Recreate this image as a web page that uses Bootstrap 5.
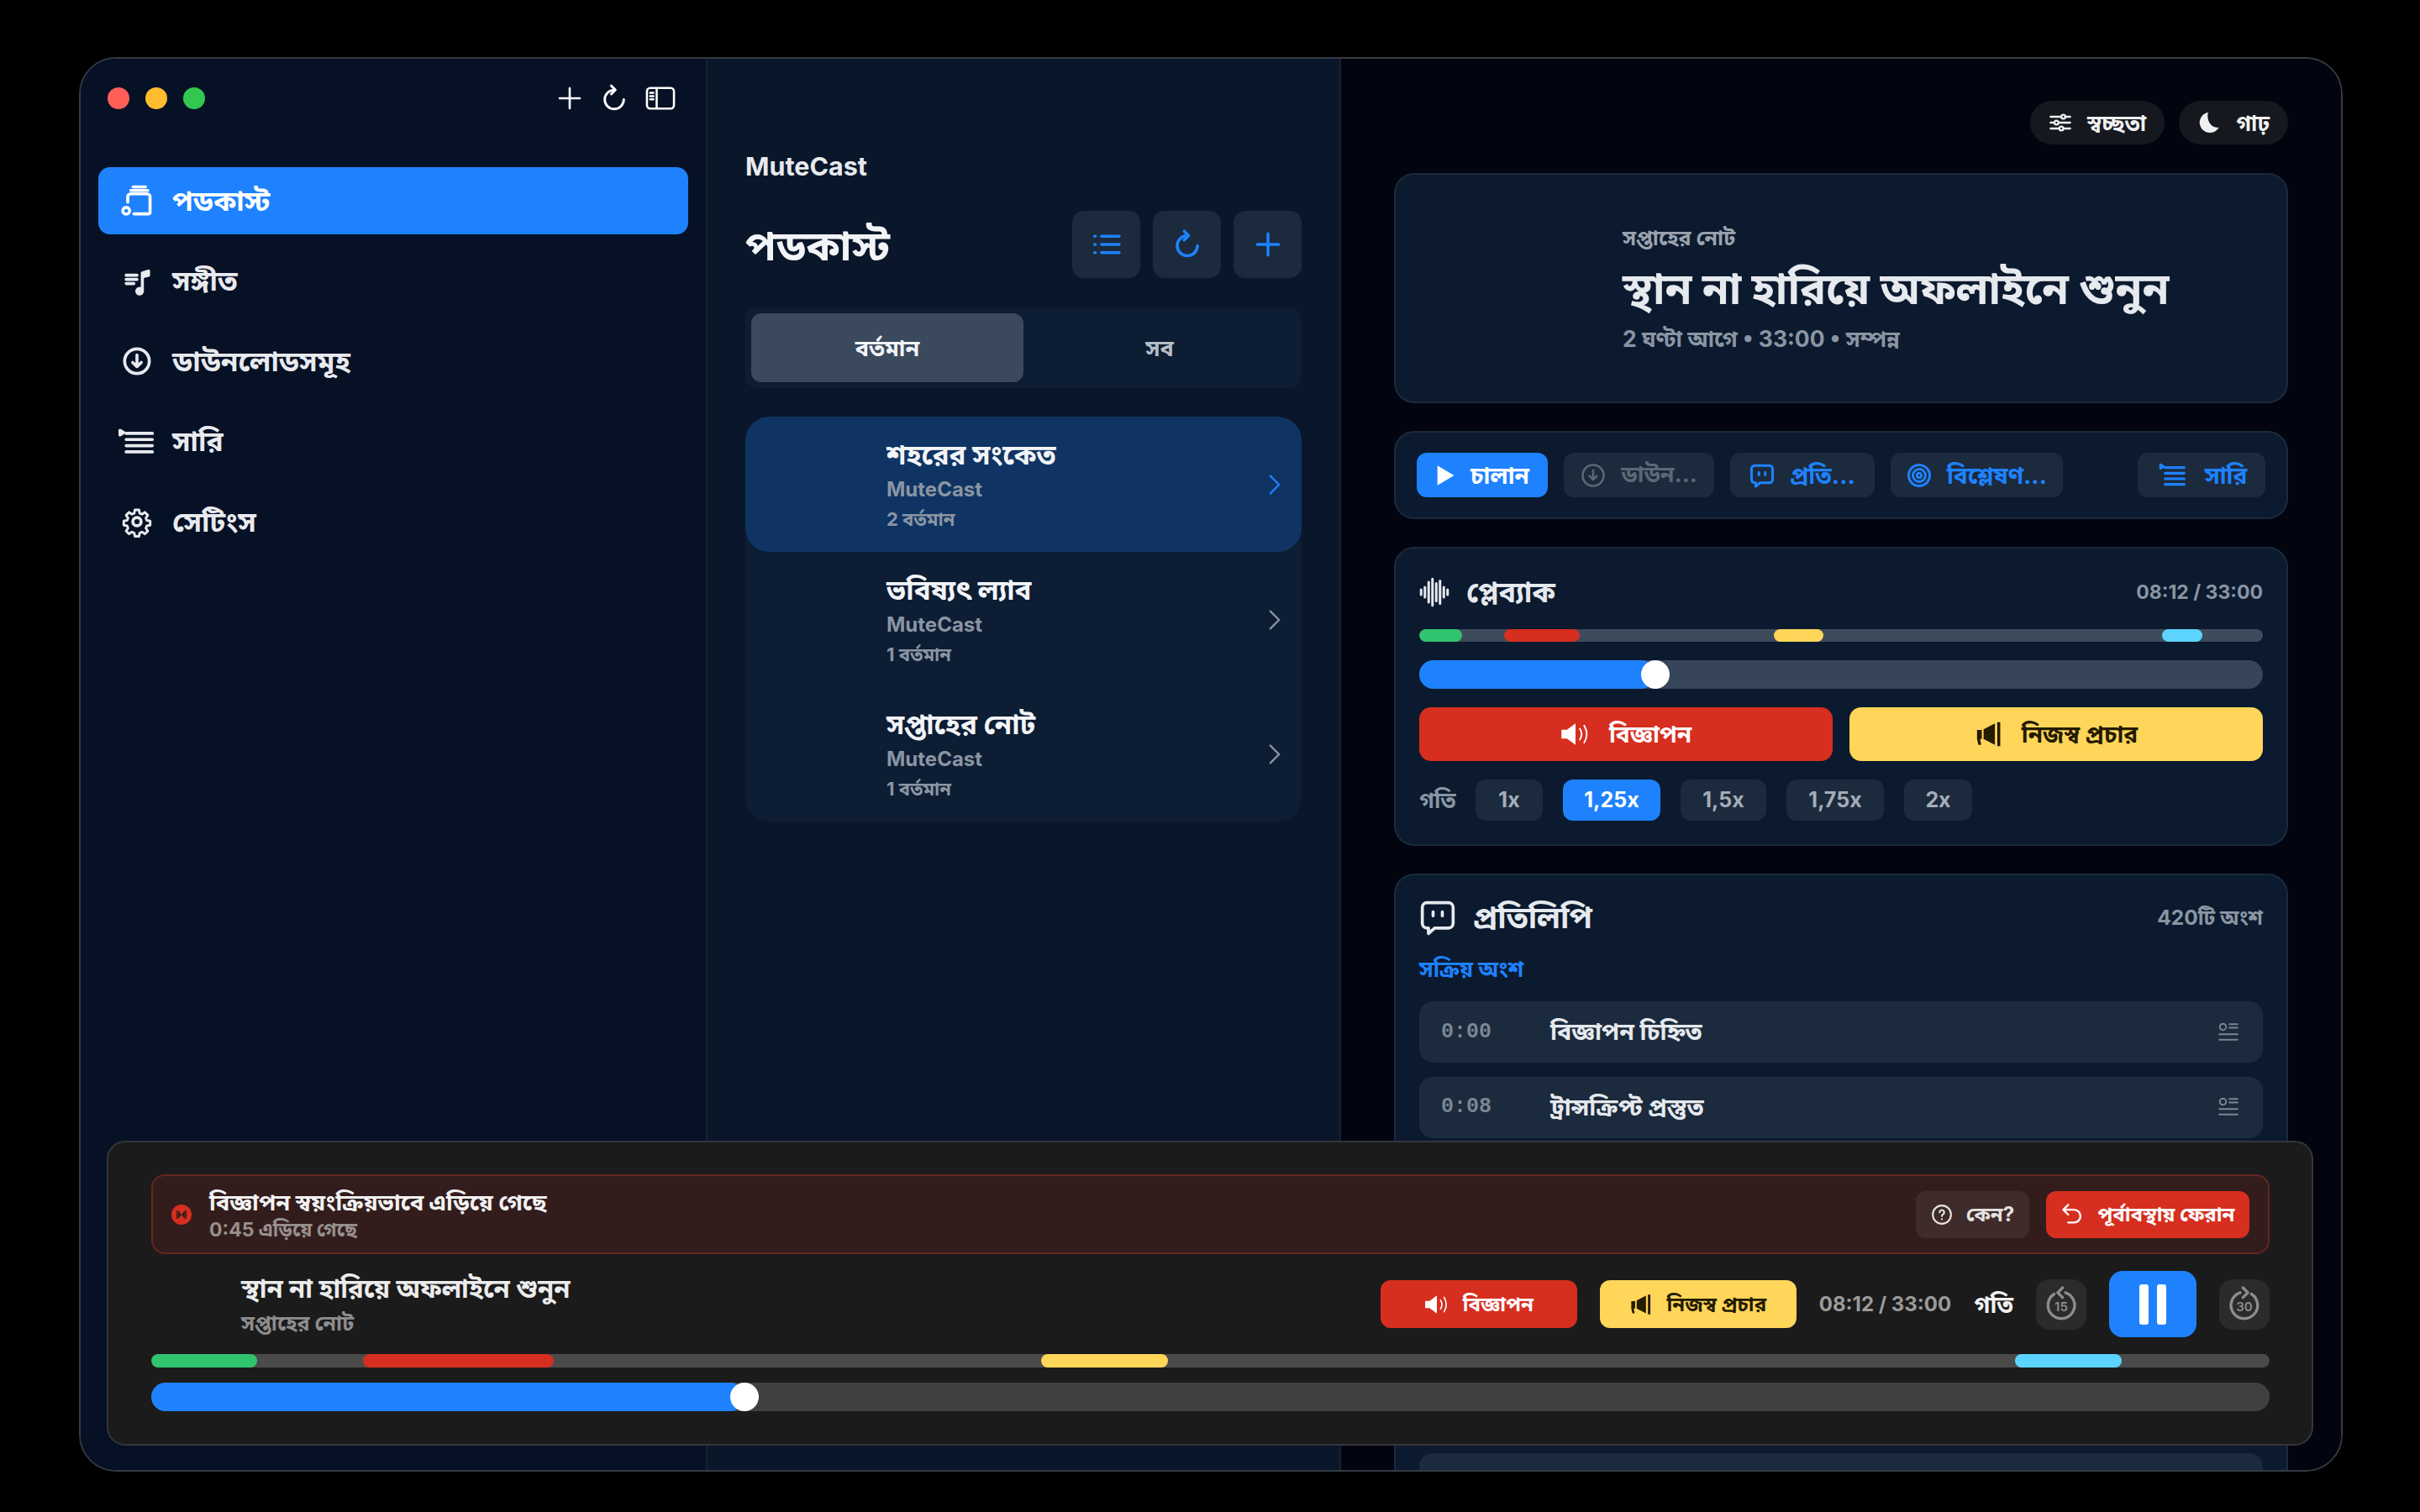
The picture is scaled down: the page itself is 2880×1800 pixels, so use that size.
<!DOCTYPE html>
<html lang="bn">
<head>
<meta charset="utf-8">
<title>MuteCast</title>
<link href="https://cdn.jsdelivr.net/npm/bootstrap@5.3.0/dist/css/bootstrap.min.css" rel="stylesheet">
<style>
html,body{background:#000;margin:0;height:100%;overflow:hidden}
body{font-family:Inter,"Noto Sans Bengali","Noto Sans","Liberation Sans",sans-serif;color:#f2f4f7;padding:68px 0 0 94px}
.app-win{width:2694px;height:1684px;border:2px solid #343a44;border-radius:44px;overflow:hidden;position:relative;background:#02040f}
.side-col{width:746px;background:#061125;border-right:2px solid #18222f;padding:0 21px;flex:none}
.title-bar{height:129px;padding:0 15px 36px 11px}
.light-set{column-gap:19px}
.tool-set{column-gap:20px}
.light{width:26px;height:26px;border-radius:50%}
.light-r{background:#ff5f57}.light-y{background:#febc2e}.light-g{background:#32c84f}
.side-nav{row-gap:15.5px}
.side-link{height:80px;border-radius:14px;padding:0 0 0 24px;color:#e8eaee;font-size:33.500px;font-weight:700;gap:20px}
.side-link.is-on{background:#1e82ff;color:#fff}
.side-ico{width:44px;height:44px;flex:none}
.side-ico svg{width:100%;height:100%}
.mid-col{width:754px;background:#0a172a;border-right:2px solid #18222f;padding:108px 45px 0 45px;flex:none}
.brand-name{font-size:30.500px;font-weight:700;line-height:40px;color:#e8eaee;margin-bottom:33px}
.mid-title{font-size:49.500px;font-weight:700;margin:0;line-height:77px;padding-top:3px}
.sq-set{column-gap:15px}
.sq-btn{width:81px;height:80px;background:#1b2a3d;border:0;border-radius:14px;padding:0;color:#1e82ff}
.seg-wrap{height:96px;background:#0c1d34;border-radius:14px;padding:7px;margin-top:35px}
.seg-item{border-radius:12px;font-size:27px;font-weight:700;color:#b6bcc5;border:0;padding:2px 0 0;background:none}
.seg-item.is-on{background:#3a4a5c;color:#f2f4f7}
.show-list{margin-top:34px;background:#0c1d34;border-radius:28px;overflow:hidden}
.show-row{height:160.6px;padding:2px 24px 0 168px;border-radius:28px;color:#f2f4f7}
.show-row.is-on{background:#0f3463}
.show-name{font-size:33px;font-weight:700;line-height:44px;margin-bottom:2px}
.show-by{font-size:24px;font-weight:700;color:#8a95a3;line-height:36px}
.show-num{font-size:22px;font-weight:700;color:#8a95a3;line-height:34px}
.main-col{flex:1;min-width:0;padding:50px 63px 0 63px;background:#02040f}
.pill-set{column-gap:17px}
.pill-btn{height:52px;border-radius:26px;background:#16181f;color:#f0f0f2;font-size:26px;font-weight:700;border:0;padding:0 22px;gap:18px}
.main-stack{gap:33px;margin-top:34px}
.pane{background:#0b1a2e;border:2px solid #1b2a3c;border-radius:24px}
.hero-pane{height:274px;padding-left:270px}
.hero-eye{font-size:25px;font-weight:700;color:#9aa3ae;line-height:38px}
.hero-name{font-size:51.500px;font-weight:700;color:#e6e9ee;line-height:82px}
.hero-meta{font-size:26.500px;font-weight:700;color:#8a95a3;line-height:38px}
.act-pane{height:105px;padding:0 25px}
.act-set{column-gap:19px}
.act-btn{height:53px;border-radius:12px;background:#1b2a3d;border:0;padding:0;gap:18px;color:#1e82ff;font-size:28px;font-weight:700;white-space:nowrap}
.act-btn.is-main{background:#1e82ff;color:#fff}
.act-btn.is-off{color:#5d6875;font-size:27px}
.wd-play{width:156px}.wd-down{width:179px}.wd-scr{width:172px}.wd-ana{width:205px}.wd-que{width:152px}
.play-pane{padding:26px 28px 28px}
.pane-head{height:52px}
.head-row{column-gap:20px}
.pane-title{font-size:34px;font-weight:700;color:#e6e9ee;margin:0;line-height:52px}
.pane-aside{font-size:24.500px;font-weight:700;color:#8a95a3}
.pane-clock{font-size:23px}
.chap-bar{height:15px;border-radius:8px;background:#3e4b5c;position:relative;overflow:hidden;margin-top:18px}
.chap{position:absolute;top:0;bottom:0;border-radius:8px}
.tone-g{background:#30c46e}.tone-r{background:#d62e1f}.tone-y{background:#ffd659}.tone-c{background:#5dd3ff}
.seek-bar{height:34px;border-radius:17px;background:#36455a;position:relative;margin-top:22px}
.seek-fill{position:absolute;left:0;top:0;bottom:0;background:#1e82ff;border-radius:17px}
.seek-knob{position:absolute;top:0;width:34px;height:34px;margin-left:-17px;border-radius:50%;background:#fff}
.big-set{margin-top:22px;column-gap:20px}
.big-btn{height:64px;border-radius:14px;border:0;font-size:28px;font-weight:700;gap:22px}
.btn-red,.btn-red:hover{background:#d62e1f;color:#fff}
.btn-yel,.btn-yel:hover{background:#ffd659;color:#241b00}
.speed-set{margin-top:22px;column-gap:24px}
.speed-lab{font-size:26px;font-weight:700;color:#8a95a3;width:43px}
.chip-btn{height:49px;border-radius:12px;background:#1b2a3d;border:0;padding:0;color:#a5adb8;font-size:25px;font-weight:700}
.chip-btn.is-on{background:#1e82ff;color:#fff}
.wd-1{width:80px}.wd-125{width:116px}.wd-15{width:102px}.wd-175{width:116px}.wd-2{width:81px}
.script-pane{padding:26px 28px 0}
.script-head{height:48px}
.script-title{font-size:37px}
.active-lab{font-size:26px;font-weight:700;color:#1e82ff;line-height:32px;margin-top:22px}
.line-stack{margin-top:22px;row-gap:16.6px}
.line-row{height:73px;background:#1b2a3c;border-radius:16px;padding:0 28px 0 26px;flex:none}
.line-time{font-family:"Liberation Mono",monospace;font-size:25px;font-weight:700;color:#7b8693;width:130px;flex:none}
.line-text{font-size:28.500px;font-weight:700;color:#e6e9ee}
.dock{position:absolute;left:31px;top:1288px;width:2626px;height:363px;background:#1b1b1c;border:2px solid #33363b;border-radius:22px;padding:38px 50px 0 51px}
.notice{height:95px;background:#331d1c;border:2px solid #67251f;border-radius:16px;padding:0 22px}
.notice-dot{width:24px;height:24px;border-radius:50%;background:#d62e1f;flex:none}
.notice-copy{margin-left:21px}
.notice-title{font-size:27.500px;font-weight:700;color:#f2f2f2;line-height:36px}
.notice-sub{font-size:23px;font-weight:700;color:#96908e;line-height:30px}
.notice-acts{column-gap:20px}
.mini-btn{height:56px;border-radius:12px;border:0;padding:0;gap:16px;font-size:24px;font-weight:700;white-space:nowrap}
.wd-why{width:135px}.wd-undo{width:242px}
.wd-ad{width:234px;height:57px}
.btn-dim,.btn-dim:hover{background:#3f2c2a;color:#e6e3e2}
.now-row{height:79px;margin:20px 0;gap:27px}
.now-copy{padding-left:107px}
.now-name{font-size:31px;font-weight:700;color:#ececec;line-height:44px}
.now-sub{font-size:25px;font-weight:700;color:#8d8d8d;line-height:38px}
.dock-time{font-size:24px;font-weight:700;color:#9b9b9b;white-space:nowrap}
.dock-speed{font-size:28px;font-weight:700;color:#f0f0f0}
.skip-btn{width:60px;height:60px;border-radius:16px;background:#2b2b2c;border:0;padding:0;color:#8d8d8d}
.pause-btn{width:104px;height:79px;border-radius:16px;background:#1e82ff;border:0;padding:0}
.dock-chap{background:#4a4a4a;height:16px;margin-top:0}
.dock-seek{background:#404040;margin-top:18px}
svg{display:block}
.strk{fill:none;stroke:currentColor;stroke-width:2;stroke-linecap:round;stroke-linejoin:round}
.strk-h{stroke-width:2.400}
.ink-soft{color:#e6e9ee}
</style>
</head>
<body>
<div class="app-win d-flex">
  <aside class="side-col">
    <div class="title-bar d-flex align-items-center justify-content-between">
      <div class="d-flex light-set">
        <span class="light light-r"></span><span class="light light-y"></span><span class="light light-g"></span>
      </div>
      <div class="d-flex align-items-center text-white tool-set">
        <svg width="32" height="32" viewBox="0 0 24 24" class="strk"><path d="M12 3v18M3 12h18"/></svg>
        <svg width="34" height="38" viewBox="0 0 24 24" class="strk"><path d="M12 5a8 8 0 1 0 8 8M9.500 1.500 13 5 9.500 8.500"/></svg>
        <svg width="36" height="30" viewBox="0 0 28 22" class="strk"><rect x="1.500" y="1.500" width="25" height="19" rx="3"/><path d="M10.500 2v18M4.500 6h3M4.500 9h3M4.500 12h3"/></svg>
      </div>
    </div>
    <nav class="nav flex-column side-nav">
      <a class="side-link is-on d-flex align-items-center text-decoration-none" href="#"><span class="side-ico"><svg viewBox="0 0 24 24" class="strk"><path d="M9.500 3h8M8 5.300h11"/><path d="M6 13V9.500a2 2 0 0 1 2-2h10.500a2 2 0 0 1 2 2V19.500a1 1 0 0 1-1 1H10"/><circle cx="5" cy="18.500" r="2.200"/></svg></span>পডকাস্ট</a>
      <a class="side-link d-flex align-items-center text-decoration-none" href="#"><span class="side-ico"><svg viewBox="0 0 24 24" class="strk"><path d="M5 8h7M5 10.700h7M5 13.400h5"/><path d="M15.500 18V6.500l4-1.200v2.700l-4 1" fill="currentColor"/><circle cx="13.700" cy="18.300" r="1.800" fill="currentColor"/></svg></span>সঙ্গীত</a>
      <a class="side-link d-flex align-items-center text-decoration-none" href="#"><span class="side-ico"><svg viewBox="0 0 24 24" class="strk"><circle cx="12" cy="12" r="8"/><path d="M12 8v7.500M9.200 12.800 12 15.500l2.800-2.700"/></svg></span>ডাউনলোডসমূহ</a>
      <a class="side-link d-flex align-items-center text-decoration-none" href="#"><span class="side-ico"><svg viewBox="0 0 24 24" class="strk"><path d="M5 6.500h17M5 10.500h17M5 14.500h17M5 18.500h17"/><path d="M1 4.500l2.500 1.500L1 7.500z" fill="currentColor"/></svg></span>সারি</a>
      <a class="side-link d-flex align-items-center text-decoration-none" href="#"><span class="side-ico"><svg viewBox="0 0 24 24" class="strk"><circle cx="12" cy="12" r="2.700"/><path d="M10.300 2.500h3.400l.5 2.700 1.900.8 2.300-1.600 2.400 2.400-1.600 2.300.8 1.900 2.700.5v3.400l-2.700.5-.8 1.900 1.600 2.300-2.400 2.400-2.300-1.600-1.900.8-.5 2.700h-3.400l-.5-2.700-1.900-.8-2.300 1.600-2.400-2.400 1.600-2.300-.8-1.900-2.700-.5v-3.400l2.700-.5.8-1.900-1.600-2.300 2.400-2.400 2.300 1.600 1.900-.8z" transform="translate(2.400 2.400) scale(.8)"/></svg></span>সেটিংস</a>
    </nav>
  </aside>

  <section class="mid-col">
    <div class="brand-name">MuteCast</div>
    <div class="d-flex align-items-center justify-content-between">
      <h1 class="mid-title">পডকাস্ট</h1>
      <div class="d-flex sq-set">
        <button class="btn sq-btn d-flex align-items-center justify-content-center" aria-label="list"><svg width="36" height="36" viewBox="0 0 24 24" class="strk strk-h"><path d="M8 5.500h14M8 12h14M8 18.500h14M2.500 5.500h.5M2.500 12h.5M2.500 18.500h.5"/></svg></button>
        <button class="btn sq-btn d-flex align-items-center justify-content-center" aria-label="refresh"><svg width="36" height="38" viewBox="0 0 24 24" class="strk strk-h"><path d="M12 5a8 8 0 1 0 8 8M9.500 1.500 13 5 9.500 8.500"/></svg></button>
        <button class="btn sq-btn d-flex align-items-center justify-content-center" aria-label="add"><svg width="34" height="34" viewBox="0 0 24 24" class="strk strk-h"><path d="M12 3v18M3 12h18"/></svg></button>
      </div>
    </div>
    <div class="seg-wrap d-flex">
      <button class="btn seg-item is-on w-50">বর্তমান</button>
      <button class="btn seg-item w-50">সব</button>
    </div>
    <div class="show-list d-flex flex-column">
      <div class="show-row is-on d-flex align-items-center justify-content-between">
        <div><div class="show-name">শহরের সংকেত</div><div class="show-by">MuteCast</div><div class="show-num">2 বর্তমান</div></div>
        <svg width="16" height="26" viewBox="0 0 12 20" fill="none" stroke="#1e82ff" stroke-width="1.800" stroke-linecap="round" stroke-linejoin="round"><path d="M2 2l8 8-8 8"/></svg>
      </div>
      <div class="show-row d-flex align-items-center justify-content-between">
        <div><div class="show-name">ভবিষ্যৎ ল্যাব</div><div class="show-by">MuteCast</div><div class="show-num">1 বর্তমান</div></div>
        <svg width="16" height="26" viewBox="0 0 12 20" fill="none" stroke="#8a95a3" stroke-width="1.800" stroke-linecap="round" stroke-linejoin="round"><path d="M2 2l8 8-8 8"/></svg>
      </div>
      <div class="show-row d-flex align-items-center justify-content-between">
        <div><div class="show-name">সপ্তাহের নোট</div><div class="show-by">MuteCast</div><div class="show-num">1 বর্তমান</div></div>
        <svg width="16" height="26" viewBox="0 0 12 20" fill="none" stroke="#8a95a3" stroke-width="1.800" stroke-linecap="round" stroke-linejoin="round"><path d="M2 2l8 8-8 8"/></svg>
      </div>
    </div>
  </section>

  <main class="main-col">
    <div class="d-flex justify-content-end pill-set">
      <button class="btn pill-btn d-flex align-items-center"><svg width="28" height="28" viewBox="0 0 24 24" class="strk"><path d="M2 6h20M2 12h20M2 18h20"/><circle cx="15" cy="6" r="2" fill="#16181f"/><circle cx="8" cy="12" r="2" fill="#16181f"/><circle cx="13" cy="18" r="2" fill="#16181f"/></svg>স্বচ্ছতা</button>
      <button class="btn pill-btn d-flex align-items-center"><svg width="28" height="28" viewBox="0 0 24 24"><path fill="currentColor" d="M11 1.500a10.500 10.500 0 1 0 11 15.500C14 18 9 10 11 1.500z"/></svg>গাঢ়</button>
    </div>
    <div class="main-stack d-flex flex-column">
      <div class="pane hero-pane d-flex flex-column justify-content-center">
        <div class="hero-eye">সপ্তাহের নোট</div>
        <div class="hero-name">স্থান না হারিয়ে অফলাইনে শুনুন</div>
        <div class="hero-meta">2 ঘণ্টা আগে • 33:00 • সম্পন্ন</div>
      </div>
      <div class="pane act-pane d-flex align-items-center">
        <div class="d-flex act-set">
          <button class="btn act-btn is-main wd-play d-flex align-items-center justify-content-center"><svg width="24" height="28" viewBox="0 0 20 24"><path fill="currentColor" d="M2 2l17 10L2 22z"/></svg>চালান</button>
          <button class="btn act-btn is-off wd-down d-flex align-items-center justify-content-center"><svg width="30" height="30" viewBox="0 0 24 24" class="strk"><circle cx="12" cy="12" r="10"/><path d="M12 7v9M8.500 12.500 12 16l3.500-3.500"/></svg>ডাউন...</button>
          <button class="btn act-btn wd-scr d-flex align-items-center justify-content-center"><svg width="30" height="32" viewBox="0 0 24 24" class="strk strk-h"><path d="M5 2.500h14a3 3 0 0 1 3 3V16a3 3 0 0 1-3 3h-9l-4 3.500V19H5a3 3 0 0 1-3-3V5.500a3 3 0 0 1 3-3z"/><path d="M9 9v2.500M15 9v2.500"/></svg>প্রতি...</button>
          <button class="btn act-btn wd-ana d-flex align-items-center justify-content-center"><svg width="30" height="30" viewBox="0 0 24 24" class="strk strk-h"><circle cx="12" cy="12" r="10"/><circle cx="12" cy="12" r="6"/><circle cx="12" cy="12" r="2.200"/></svg>বিশ্লেষণ...</button>
        </div>
        <button class="btn act-btn wd-que d-flex align-items-center justify-content-center ms-auto"><svg width="40" height="32" viewBox="0 0 24 24" class="strk strk-h"><path d="M5 5h17M5 10h17M5 15h17M5 20h17"/><path d="M1 2.500l2.500 1.500L1 5.500z" fill="currentColor"/></svg>সারি</button>
      </div>
      <div class="pane play-pane">
        <div class="pane-head d-flex align-items-center justify-content-between">
          <div class="d-flex align-items-center head-row"><svg width="36" height="38" viewBox="0 0 24 24" class="strk ink-soft"><path d="M1.500 10v4M4.500 8v8M7.500 4v16M10.500 1.500v21M13.500 5v14M16.500 3v18M19.500 8v8M22.500 10v4"/></svg><h2 class="pane-title">প্লেব্যাক</h2></div>
          <span class="pane-aside pane-clock">08:12 / 33:00</span>
        </div>
        <div class="chap-bar">
          <span class="chap tone-g" style="left:0;width:5.100%"></span><span class="chap tone-r" style="left:10.100%;width:8.900%"></span><span class="chap tone-y" style="left:42%;width:5.900%"></span><span class="chap tone-c" style="left:88%;width:4.800%"></span>
        </div>
        <div class="seek-bar"><span class="seek-fill" style="width:28%"></span><span class="seek-knob" style="left:28%"></span></div>
        <div class="d-flex big-set">
          <button class="btn big-btn btn-red flex-fill w-50 d-flex align-items-center justify-content-center"><svg width="36" height="32" viewBox="0 0 28 24"><path fill="currentColor" d="M1 8h5l8-6v20l-8-6H1z"/><path d="M18 7c2 3 2 7 0 10M22 4c3 5 3 11 0 16" fill="none" stroke="currentColor" stroke-width="1.500" stroke-linecap="round"/></svg>বিজ্ঞাপন</button>
          <button class="btn big-btn btn-yel flex-fill w-50 d-flex align-items-center justify-content-center"><svg width="34" height="34" viewBox="0 0 24 24"><path fill="currentColor" d="M2 8.500h4V16H4.500l1 5H3.200L2 16zM7.500 8 17 3v18l-9.500-5zM19 2h2.500v20H19z"/></svg>নিজস্ব প্রচার</button>
        </div>
        <div class="d-flex align-items-center speed-set">
          <span class="speed-lab">গতি</span>
          <button class="btn chip-btn wd-1">1x</button>
          <button class="btn chip-btn is-on wd-125">1,25x</button>
          <button class="btn chip-btn wd-15">1,5x</button>
          <button class="btn chip-btn wd-175">1,75x</button>
          <button class="btn chip-btn wd-2">2x</button>
        </div>
      </div>
      <div class="pane script-pane">
        <div class="pane-head script-head d-flex align-items-center justify-content-between">
          <div class="d-flex align-items-center head-row"><svg width="44" height="44" viewBox="0 0 24 24" class="strk ink-soft"><path d="M5 2.500h14a3 3 0 0 1 3 3V16a3 3 0 0 1-3 3h-9l-4 3.500V19H5a3 3 0 0 1-3-3V5.500a3 3 0 0 1 3-3z"/><path d="M9 8.500v2.500M15 8.500v2.500"/></svg><h2 class="pane-title script-title">প্রতিলিপি</h2></div>
          <span class="pane-aside">420টি অংশ</span>
        </div>
        <div class="active-lab">সক্রিয় অংশ</div>
        <div class="d-flex flex-column line-stack">
          <div class="line-row d-flex align-items-center"><span class="line-time">0:00</span><span class="line-text">বিজ্ঞাপন চিহ্নিত</span><svg class="ms-auto" width="26" height="28" viewBox="0 0 24 24" fill="none" stroke="#7b8693" stroke-width="1.800" stroke-linecap="round"><circle cx="6" cy="6" r="3.500"/><path d="M13 3h9M13 7h9M2 14h20M2 20h20"/></svg></div>
          <div class="line-row d-flex align-items-center"><span class="line-time">0:08</span><span class="line-text">ট্রান্সক্রিপ্ট প্রস্তুত</span><svg class="ms-auto" width="26" height="28" viewBox="0 0 24 24" fill="none" stroke="#7b8693" stroke-width="1.800" stroke-linecap="round"><circle cx="6" cy="6" r="3.500"/><path d="M13 3h9M13 7h9M2 14h20M2 20h20"/></svg></div>
          <div class="line-row"></div><div class="line-row"></div><div class="line-row"></div><div class="line-row"></div><div class="line-row"></div>
        </div>
      </div>
    </div>
  </main>

  <div class="dock">
    <div class="notice d-flex align-items-center">
      <span class="notice-dot d-flex align-items-center justify-content-center"><svg width="14" height="14" viewBox="0 0 14 14"><path fill="#331d1c" d="M1 2h1.500v10H1zM3 2l4 5-4 5zM13 2h-1.500v10H13zM11 2L7 7l4 5z"/></svg></span>
      <div class="notice-copy"><div class="notice-title">বিজ্ঞাপন স্বয়ংক্রিয়ভাবে এড়িয়ে গেছে</div><div class="notice-sub">0:45 এড়িয়ে গেছে</div></div>
      <div class="d-flex ms-auto notice-acts">
        <button class="btn mini-btn btn-dim wd-why d-flex align-items-center justify-content-center"><svg width="26" height="28" viewBox="0 0 24 24" class="strk"><circle cx="12" cy="12" r="10"/><path d="M9.500 9.500a2.500 2.500 0 1 1 3.800 2.100c-.8.500-1.300 1-1.300 2M12 17v.1"/></svg>কেন?</button>
        <button class="btn mini-btn btn-red wd-undo d-flex align-items-center justify-content-center"><svg width="28" height="28" viewBox="0 0 24 24" class="strk"><path d="M8 2 3 7l5 5M3 7h11a6.500 6.500 0 0 1 0 13H8"/></svg>পূর্বাবস্থায় ফেরান</button>
      </div>
    </div>
    <div class="now-row d-flex align-items-center">
      <div class="me-auto now-copy"><div class="now-name">স্থান না হারিয়ে অফলাইনে শুনুন</div><div class="now-sub">সপ্তাহের নোট</div></div>
      <button class="btn mini-btn btn-red wd-ad d-flex align-items-center justify-content-center"><svg width="30" height="28" viewBox="0 0 28 24"><path fill="currentColor" d="M1 8h5l8-6v20l-8-6H1z"/><path d="M18 7c2 3 2 7 0 10M22 4c3 5 3 11 0 16" fill="none" stroke="currentColor" stroke-width="1.500" stroke-linecap="round"/></svg>বিজ্ঞাপন</button>
      <button class="btn mini-btn btn-yel wd-ad d-flex align-items-center justify-content-center"><svg width="28" height="30" viewBox="0 0 24 24"><path fill="currentColor" d="M2 8.500h4V16H4.500l1 5H3.200L2 16zM7.500 8 17 3v18l-9.500-5zM19 2h2.500v20H19z"/></svg>নিজস্ব প্রচার</button>
      <span class="dock-time">08:12 / 33:00</span>
      <span class="dock-speed">গতি</span>
      <button class="btn skip-btn d-flex align-items-center justify-content-center" aria-label="back 15"><svg width="40" height="44" viewBox="0 0 24 26" fill="none" stroke="currentColor" stroke-width="2" stroke-linecap="round"><path d="M15 4.500A9.500 9.500 0 1 1 7 5.500"/><path d="M13 1l-3.500 3.500L13 8" stroke-linejoin="round"/><text x="12" y="18" font-size="9" font-family="Inter,sans-serif" font-weight="600" text-anchor="middle" fill="currentColor" stroke="none">15</text></svg></button>
      <button class="btn pause-btn d-flex align-items-center justify-content-center" aria-label="pause"><svg width="36" height="48" viewBox="0 0 36 48"><rect x="2" y="0" width="11" height="48" rx="3" fill="#fff"/><rect x="23" y="0" width="11" height="48" rx="3" fill="#fff"/></svg></button>
      <button class="btn skip-btn d-flex align-items-center justify-content-center" aria-label="forward 30"><svg width="40" height="44" viewBox="0 0 24 26" fill="none" stroke="currentColor" stroke-width="2" stroke-linecap="round"><path d="M9 4.500A9.500 9.500 0 1 0 17 5.500"/><path d="M11 1l3.500 3.500L11 8" stroke-linejoin="round"/><text x="12" y="18" font-size="9" font-family="Inter,sans-serif" font-weight="600" text-anchor="middle" fill="currentColor" stroke="none">30</text></svg></button>
    </div>
    <div class="chap-bar dock-chap">
      <span class="chap tone-g" style="left:0;width:5%"></span><span class="chap tone-r" style="left:10%;width:9%"></span><span class="chap tone-y" style="left:42%;width:6%"></span><span class="chap tone-c" style="left:88%;width:5%"></span>
    </div>
    <div class="seek-bar dock-seek"><span class="seek-fill" style="width:28%"></span><span class="seek-knob" style="left:28%"></span></div>
  </div>
</div>
</body>
</html>
